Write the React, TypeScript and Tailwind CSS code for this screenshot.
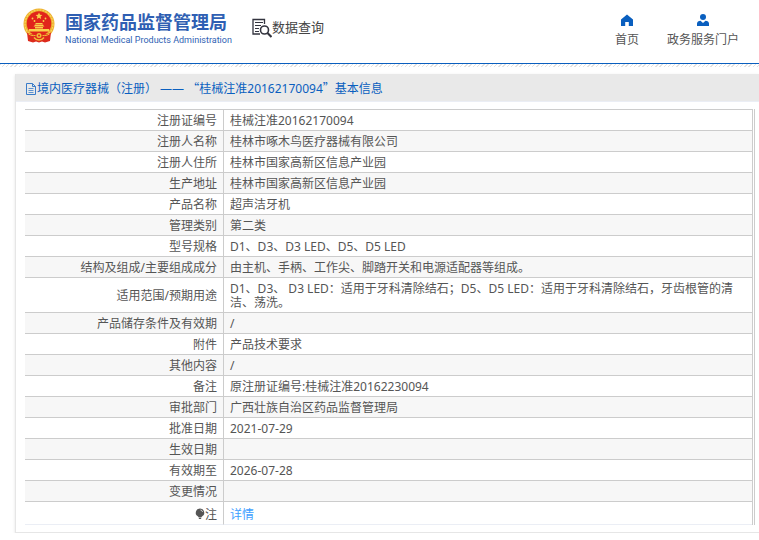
import type { ReactNode } from 'react';

interface InfoRow {
  label: string;
  value: string;
}

const rows: InfoRow[] = [
  { label: '注册证编号', value: '桂械注准20162170094' },
  { label: '注册人名称', value: '桂林市啄木鸟医疗器械有限公司' },
  { label: '注册人住所', value: '桂林市国家高新区信息产业园' },
  { label: '生产地址', value: '桂林市国家高新区信息产业园' },
  { label: '产品名称', value: '超声洁牙机' },
  { label: '管理类别', value: '第二类' },
  { label: '型号规格', value: 'D1、D3、D3 LED、D5、D5 LED' },
  { label: '结构及组成/主要组成成分', value: '由主机、手柄、工作尖、脚踏开关和电源适配器等组成。' },
  {
    label: '适用范围/预期用途',
    value: 'D1、D3、 D3 LED：适用于牙科清除结石；D5、D5 LED：适用于牙科清除结石，牙齿根管的清洁、荡洗。',
  },
  { label: '产品储存条件及有效期', value: '/' },
  { label: '附件', value: '产品技术要求' },
  { label: '其他内容', value: '/' },
  { label: '备注', value: '原注册证编号:桂械注准20162230094' },
  { label: '审批部门', value: '广西壮族自治区药品监督管理局' },
  { label: '批准日期', value: '2021-07-29' },
  { label: '生效日期', value: '' },
  { label: '有效期至', value: '2026-07-28' },
  { label: '变更情况', value: '' },
];

function Emblem() {
  return (
    <svg viewBox="0 0 32 36" className="h-9 w-8 shrink-0" aria-hidden="true">
      <circle cx="16" cy="16" r="15.5" fill="#eeb02f" />
      <circle cx="16" cy="16" r="14" fill="none" stroke="#f8d65c" strokeWidth="1.2" strokeDasharray="2 1" />
      <circle cx="16" cy="15.5" r="12.3" fill="#e1251b" />
      <path
        d="m16 4.500 1 2.200 2.400.3-1.800 1.600.5 2.400L16 9.800 13.900 11l.5-2.400L12.600 7l2.400-.3z"
        fill="#f9d24a"
      />
      <g fill="#f9d24a">
        <circle cx="9.500" cy="10.500" r=".9" />
        <circle cx="11.500" cy="13" r=".9" />
        <circle cx="20.500" cy="13" r=".9" />
        <circle cx="22.500" cy="10.500" r=".9" />
        <path d="M11.500 16.500 13 15h6l1.500 1.500zM10.500 18.500 12 17h8l1.500 1.500zM12 19h8v1.500h-8zM6 21h20v2.500H6z" />
      </g>
      <path d="M4 24.500c3 2 6 2 8.500 1.500L16 24l3.500 2c2.500.5 5.500.5 8.500-1.500L27 33l-5 1.500-3-1-3 1-3-1-3 1L5 33z" fill="#dd2a1c" />
      <path d="M5.500 26c2.500 1.500 4.500 1.800 7 1.500M26.500 26c-2.500 1.500-4.500 1.800-7 1.500" fill="none" stroke="#f3bd36" />
      <path d="M11 29.500c1.500 2 3 2.500 5 2.500s3.500-.5 5-2.500" fill="none" stroke="#f3bd36" strokeWidth="1.500" />
      <circle cx="16" cy="27.500" r="2.500" fill="#f3bd36" />
      <circle cx="16" cy="27.500" r="1" fill="#e1251b" />
    </svg>
  );
}

function QueryIcon() {
  return (
    <svg viewBox="0 0 20 20" className="h-5 w-5 shrink-0" fill="none" stroke="#33343f" aria-hidden="true">
      <path d="M12.500 6V1.500H1V16h7" strokeWidth="1.300" />
      <path d="M3 4.500h8M3 7.500h6M3 10.500h4M3 13.500h4" strokeWidth="1" />
      <circle cx="12.500" cy="12" r="4" strokeWidth="1.600" />
      <path d="m15.500 15 4 4" strokeWidth="2.200" />
    </svg>
  );
}

function HomeIcon() {
  return (
    <svg viewBox="0 0 12 12" className="h-3 w-3" fill="#0a5fbf" aria-hidden="true">
      <path d="M6 .5 0 5.500V12h4.200V8h3.600v4H12V5.500z" />
    </svg>
  );
}

function UserIcon() {
  return (
    <svg viewBox="0 0 12 12" className="h-3 w-3" fill="#0a5fbf" aria-hidden="true">
      <circle cx="6" cy="3" r="3" />
      <path d="M0 12V9.500C0 8 1.500 7 3.500 6.800L6 9l2.500-2.200C10.500 7 12 8 12 9.500V12z" />
    </svg>
  );
}

function FileIcon() {
  return (
    <svg viewBox="0 0 11 12" className="h-3 w-[11px] shrink-0" fill="none" stroke="#3a7cc9" aria-hidden="true">
      <path d="M.5.5h6l3 3v8h-9zM6.500.5v3h3" />
      <path d="M2.500 5.500h5M2.500 7.500h5M2.500 9.500h5" strokeWidth=".8" />
    </svg>
  );
}

function BulbIcon() {
  return (
    <svg viewBox="0 0 10 12" className="inline-block h-3 w-2.5 align-[-1px]" aria-hidden="true">
      <path d="M5 .5a4.200 4.200 0 0 0-2.500 7.600L3.500 9h3l1-.9A4.200 4.200 0 0 0 5 .5zM3.500 9.500h3L6 11H4z" fill="#555" />
      <path d="M5.500 2c1.200.2 1.800 1 2 2" fill="none" stroke="#fff" strokeWidth=".8" />
    </svg>
  );
}

function NavLink({ icon, children }: { icon: ReactNode; children: ReactNode }) {
  return (
    <a href="#" className="flex flex-col items-center gap-1 text-xs leading-5 text-[#555]">
      {icon}
      {children}
    </a>
  );
}

export default function App() {
  return (
    <div lang="zh-CN" className="bg-white font-['Noto_Sans','Noto_Sans_CJK_SC',sans-serif] text-xs text-[#555]">
      {/* Header */}
      <header className="flex h-16 items-start justify-between border-b border-[#0a5fbf] pr-5 pl-[23px]">
        <div className="flex items-start">
          <a href="#" className="flex gap-2.5 pt-2">
            <Emblem />
            <span className="flex flex-col whitespace-nowrap text-[#2f5fb3]">
              <span className="font-['Noto_Sans_CJK_SC',sans-serif] text-[18px] leading-[27px] font-bold">
                国家药品监督管理局
              </span>
              <span className="font-[Roboto,sans-serif] text-[9px] leading-[10px]">
                National Medical Products Administration
              </span>
            </span>
          </a>
          <a href="#" className="ml-5 flex items-start pt-[18px] text-[#444]">
            <QueryIcon />
            <span className="text-[13px] leading-[18px]">数据查询</span>
          </a>
        </div>
        <nav className="flex gap-7 pt-[14px]">
          <NavLink icon={<HomeIcon />}>首页</NavLink>
          <NavLink icon={<UserIcon />}>政务服务门户</NavLink>
        </nav>
      </header>
      <div className="h-[3px] bg-[repeating-linear-gradient(135deg,#e2e2e2_0_1px,#fff_1px_3px)]" />

      {/* Details card */}
      <main className="mt-[7px] ml-[15px] border-b border-l border-[#e6e6e6] shadow-sm">
        <h1 className="flex h-7 items-center border-b border-[#ebeef5] bg-[#e9e9e9] pt-0.5 pl-2.5 text-[#0a5fbf]">
          <FileIcon />
          <span>
            境内医疗器械（注册） —— <span className="font-['Noto_Sans_CJK_SC',sans-serif]">“</span>
            桂械注准20162170094<span className="font-['Noto_Sans_CJK_SC',sans-serif]">”</span>基本信息
          </span>
        </h1>
        <div className="mt-[7px] mr-1 mb-[7px] ml-[9px] border-r border-[#ccc] pr-px">
          <table className="w-full table-fixed border-separate border-spacing-0 border-t border-r border-[#ccc] leading-[14px]">
            <colgroup>
              <col className="w-[199px]" />
              <col />
            </colgroup>
            <tbody>
              {rows.map((row) => (
                <tr key={row.label} className="even:bg-[#f7f7f7]">
                  <th scope="row" className="border-r border-b border-[#ccc] px-1.5 pt-1 pb-0.5 text-right font-normal">
                    {row.label}
                  </th>
                  <td className="border-b border-[#ccc] px-1.5 pt-1 pb-0.5">{row.value}</td>
                </tr>
              ))}
              <tr>
                <th
                  scope="row"
                  className="border-r border-b border-r-[#ccc] border-b-[#ebeef5] px-1.5 pt-1.5 pb-0.5 text-right font-normal"
                >
                  <BulbIcon />注
                </th>
                <td className="border-b border-[#ebeef5] px-1.5 pt-1.5 pb-0.5">
                  <a href="#" className="text-[#409eff]">详情</a>
                </td>
              </tr>
            </tbody>
          </table>
        </div>
      </main>
    </div>
  );
}
